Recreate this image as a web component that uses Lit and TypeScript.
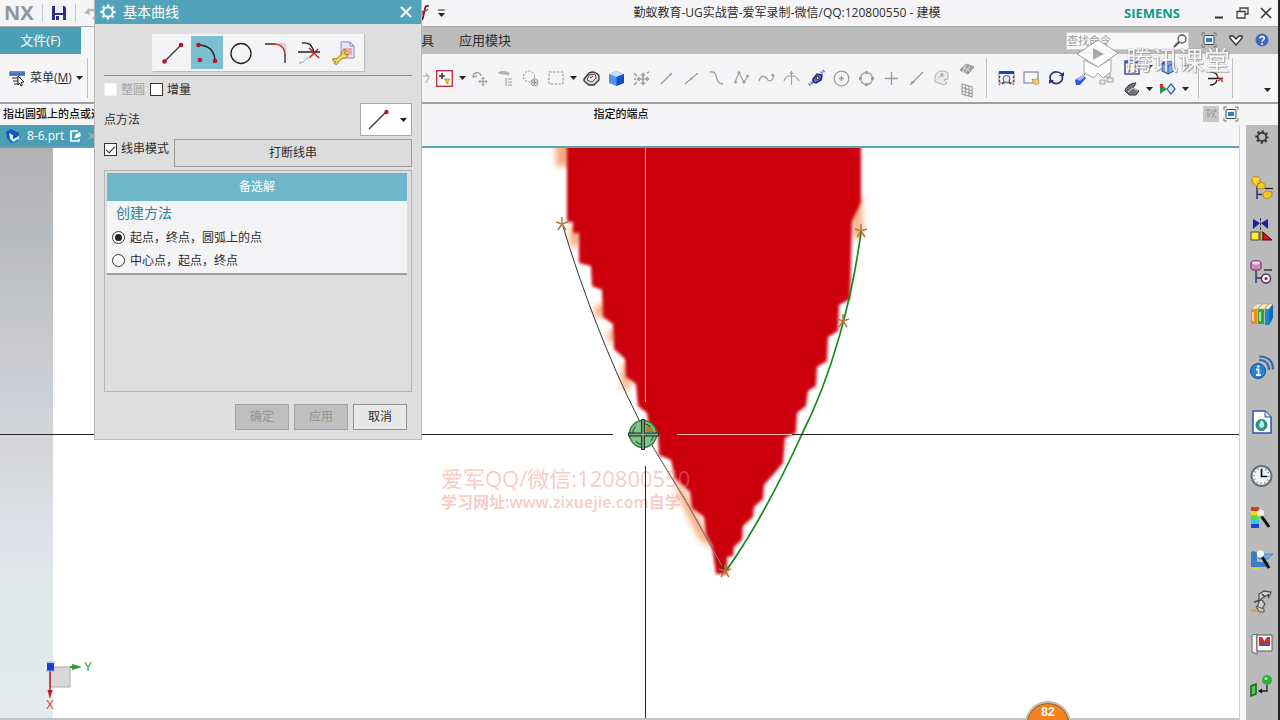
import { LitElement, html, svg, css, type TemplateResult } from "lit";
import { customElement, property, state } from "lit/decorators.js";
import { classMap } from "lit/directives/class-map.js";

const icon = (w: number, h: number, body: unknown): TemplateResult =>
  html`<svg class="ico" width=${w} height=${h} viewBox="0 0 ${w} ${h}" fill="none" aria-hidden="true">${body}</svg>`;

const gear = (size: number, color: string) => html`<svg class="ico" width=${size} height=${size} viewBox="0 0 16 16" fill="none" stroke=${color} aria-hidden="true">
  <circle cx="8" cy="8" r="4.800" stroke-width="2"></circle>
  <circle cx="8" cy="8" r="6.600" stroke-width="2" stroke-dasharray="2.600 2.580" stroke-dashoffset="1.300"></circle>
</svg>`;

const caret = html`<svg class="ico" width="7" height="4" viewBox="0 0 7 4" aria-hidden="true"><path d="M0 0h7L3.500 4z" fill="#222"></path></svg>`;

const windowBox = (s: number) => icon(s, s, svg`
  <path d="M1 4V1h3M${s - 4} 1h3v3M${s - 1} ${s - 4}v3h-3M4 ${s - 1}H1v-3" stroke="#777"/>
  <rect x="3" y="3.500" width=${s - 6} height=${s - 7} rx="1" fill="#eef5fb" stroke="#444"/>
  <rect x="5" y="6" width=${s - 10} height=${s - 12} fill="#2f7fc8"/>`);

const I = {
  save: icon(16, 16, svg`<path d="M1 1h12.500L15 2.500V15H1z" fill="#2b2f86"/><path d="M4 1h8v7H4z" fill="#e9ecf8"/><path d="M4 10h8v5H4z" fill="#fff"/><path d="M5 11h3v4H5z" fill="#2b2f86"/>`),
  undo: icon(14, 14, svg`<path d="M3 6C6 3 12 3 12 8c0 2-1 4-3 5" stroke="#b9b9bb" stroke-width="2.500"/><path d="M0 7l6 2-1-7z" fill="#b9b9bb"/>`),
  fx: icon(14, 18, svg`<path d="M12 2C8 1 8 4 7 9s-1 8-5 7" stroke="#6f2028" stroke-width="1.800"/><path d="M1 8c5-2 7 2 10-3M1 13c3-2 5-2 6-6" stroke="#c02030" stroke-width="1.300"/>`),
  menu: icon(17, 17, svg`<path d="M1 2h14v3H1zM3 8h9M4 11h7M5 14h5" stroke="#6b6b70" stroke-width="1.500"/><path d="M1 4h15" stroke="#3b78c4" stroke-width="3"/><path d="M9 6l6 6-3 .3 1.500 3-1.500.7-1.500-3L9 15z" fill="#fff" stroke="#222"/>`),
  pick: icon(17, 17, svg`<rect x=".7" y=".7" width="15.600" height="15.600" fill="#fff" stroke="#c33040" stroke-width="1.400"/><path d="M3 6h6M6 3v6" stroke="#4a2a2a" stroke-width="1.600"/><path d="M8 9h6l-2 3v2l-2-1v-2z" fill="#f4c430" stroke="#a07a10" stroke-width=".6"/>`),
  addDot: icon(17, 17, svg`<path d="M1 7C1 2 8 1 9 6M2 3l-1 4 4-1" stroke="#a5a5a5" stroke-width="1.300"/><path d="M11 7v9M6.500 11.500h9" stroke="#a5a5a5" stroke-width="1.300"/><path d="M9 9l2-2 2 2zM9 14l2 2 2-2zM8.500 9.500l-2 2 2 2zM13.500 9.500l2 2-2 2z" fill="#a5a5a5"/>`),
  hook: icon(17, 17, svg`<path d="M1 3c2-3 8-2 12 0l-2 3C8 3 5 6 1 3z" fill="#b2b2b2"/><path d="M9 8v8M11 9h4M11 12h4M11 15h4" stroke="#b5b5b5" stroke-width="1.500"/>`),
  ring: icon(17, 17, svg`<circle cx="7" cy="6.500" r="5.500" stroke="#8f8f8f" stroke-dasharray="2 1.500"/><circle cx="12.500" cy="12.500" r="3.500" stroke="#999"/><path d="M12.500 10v5M10 12.500h5" stroke="#999" stroke-width="1.500"/>`),
  marquee: icon(16, 16, svg`<rect x="1" y="2" width="14" height="12" stroke="#8c8c8c" stroke-dasharray="2.500 1.500"/>`),
  shell: icon(17, 15, svg`<path d="M1 8l5-6c4-2 8-1 10 3v4l-5 5H6L1 10z" fill="#cfd6d3" stroke="#333" stroke-width="1.300"/><path d="M4 9l2-5 6-1 1 4-4 4z" fill="#f3e7e9" stroke="#555"/><path d="M7 7l3-2" stroke="#c33" stroke-width="1.200"/>`),
  cube: icon(17, 17, svg`<path d="M8.500 1L16 4v9l-7.500 3L1 13V4z" fill="#4b94f0"/><path d="M8.500 1L16 4 8.500 7 1 4z" fill="#bfe0ff"/><path d="M8.500 7L16 4v9l-7.500 3z" fill="#1c4bbd"/>`),
  move: icon(17, 17, svg`<path d="M10 4v10M5 9h10M8 5.500l2-2 2 2M8 12.500l2 2 2-2M13.500 7l2 2-2 2M6.500 7l-2 2 2 2" stroke="#a0a0a0" stroke-width="1.500"/><path d="M1 3l3 3M1 15l3-3M1 9h2M14 3l2-1" stroke="#a0a0a0" stroke-width="1.600"/>`),
  lineA: icon(15, 15, svg`<path d="M2 13L13 2" stroke="#9a9a9a" stroke-width="1.200"/><path d="M10 3l3-1-1 3z" fill="#9a9a9a"/>`),
  lineB: icon(15, 15, svg`<path d="M1 13L14 2" stroke="#9a9a9a" stroke-width="1.200"/><circle cx="7.500" cy="7.500" r="1.300" fill="#aaa"/>`),
  sCurve: icon(15, 16, svg`<path d="M1 2c10-2 3 12 13 12" stroke="#9a9a9a" stroke-width="1.300"/>`),
  zig: icon(17, 16, svg`<path d="M2 12L6 3l5 9 4-6" stroke="#a5a5a5" stroke-width="1.200"/><circle cx="2.500" cy="12" r="1.500" fill="#a5a5a5"/><circle cx="6" cy="3" r="1.700" fill="#a5a5a5"/><circle cx="11" cy="12" r="1.700" fill="#a5a5a5"/><circle cx="14.500" cy="6" r="1.500" fill="#a5a5a5"/>`),
  wave: icon(17, 14, svg`<path d="M1 10c2-6 5-6 8-2 2 3 5 3 7-4" stroke="#a0a0a0" stroke-width="1.300"/><circle cx="14.500" cy="4" r="1.300" fill="#a0a0a0"/>`),
  arch: icon(17, 16, svg`<path d="M1 11C3 4 13 4 16 11M8.500 1v14" stroke="#a0a0a0" stroke-width="1.200"/><path d="M6.500 4l2-3 2 3z" fill="#a0a0a0"/>`),
  pen: icon(18, 18, svg`<path d="M5 10l4-5 5 1-1 5-5 3-3-1z" fill="#5f6fd0" stroke="#1c2a80" stroke-width="1.500"/><circle cx="9.500" cy="9" r="1.500" fill="#fff" stroke="#222"/><path d="M1 16l4-3M13 4l4-3" stroke="#6576d8" stroke-width="3" stroke-dasharray="1.500 1"/>`),
  target: icon(17, 17, svg`<circle cx="8.500" cy="8.500" r="7.300" stroke="#9a9a9a" stroke-width="1.200"/><path d="M8.500 6v5M6 8.500h5" stroke="#9a9a9a" stroke-width="1.300"/>`),
  circ4: icon(17, 17, svg`<circle cx="8.500" cy="8.500" r="6" stroke="#9a9a9a" stroke-width="1.200"/><path d="M8.500 1v3M8.500 13v3M1 8.500h3M13 8.500h3" stroke="#9a9a9a" stroke-width="2.500"/>`),
  plus: icon(15, 15, svg`<path d="M7.500 1v13M1 7.500h13" stroke="#9a9a9a" stroke-width="1.300"/>`),
  lineC: icon(15, 15, svg`<path d="M1 14L14 1" stroke="#9a9a9a" stroke-width="1.200"/><path d="M2 10l4 1-3 2z" fill="#9a9a9a"/>`),
  face: icon(17, 16, svg`<path d="M2 6c2-6 9-6 13-3v6l-4 1 3 3-3 2-9-3z" fill="#e8e8e8" stroke="#b0b0b0"/><path d="M5 7l6-1" stroke="#bbb"/><circle cx="9" cy="4.500" r="1.500" fill="#aaa"/>`),
  gridTop: icon(16, 14, svg`<path d="M1 8l6-6 8 3-6 7z" fill="#a5a5a5" stroke="#8f8f8f"/><path d="M4 5l7 4M7 2l-3 8M11 4L6 11" stroke="#dcdcdc"/>`),
  gridBot: icon(12, 15, svg`<path d="M1 1l10 3v10L1 11zM1 4.500l10 3M1 8l10 3M4.500 2v10M8 3v10" stroke="#9d9d9d" stroke-width="1.200"/>`),
  fit: icon(17, 16, svg`<path d="M1 2h15v11H1z" stroke="#7a8192"/><path d="M1 2.500h15" stroke="#1f3fbf" stroke-width="3"/><path d="M1.500 6v9M15.500 6v9" stroke="#c22" stroke-width="1.500" stroke-dasharray="2 2"/><circle cx="8.500" cy="9" r="3.500" fill="#dfeef5" stroke="#556"/><path d="M4 14l2-2M11 12l2 2" stroke="#333" stroke-width="1.500"/>`),
  pan: icon(17, 16, svg`<rect x="1" y="2" width="14" height="11" fill="#f6f7fb" stroke="#66709a"/><path d="M9 9l3 1 3-2 1 5-3 2-3-2z" fill="#f0cd6a" stroke="#a88a3c" stroke-width=".7"/>`),
  rotate: icon(17, 16, svg`<path d="M3 11C0 5 5 1.500 9 2c3 .3 5 2 5.500 4M14 5c2 6-3 9-6 8.500-2 0-4-1-5-3" stroke="#27357a" stroke-width="1.700"/><path d="M11 6h5V2zM6 10H1v4z" fill="#27357a"/>`),
  brush: icon(15, 15, svg`<path d="M1 9l8-5 3 3-6 7H2z" fill="#2f55d8"/><path d="M2 8l7-4 2 2-5 4z" fill="#9bb7ff"/><path d="M10 4l3-3" stroke="#444"/>`),
  blocks: icon(17, 17, svg`<path d="M6 3h6v4H6zM2 10h5v4H2zM9 8h6v4H9z" fill="#ececec" stroke="#a0a0a0"/>`),
  layout: icon(16, 15, svg`<rect x="1" y="1" width="14" height="13" fill="#fff" stroke="#2c458c" stroke-width="1.400"/><path d="M1 2.500h14" stroke="#2c55b8" stroke-width="2"/><path d="M4 5.500l2 2M12 5.500l-2 2M4 12l2-2M12 12l-2-2" stroke="#c0392b" stroke-width="2.200"/>`),
  cube2: icon(16, 15, svg`<path d="M8 1l6 2v8l-6 3-6-3V3z" fill="#7aa4ee" stroke="#234a9e"/><path d="M2 3l6 3 6-3M8 6v8" stroke="#234a9e"/>`),
  clip: icon(16, 14, svg`<path d="M1 9C2 4 7 1 12 1L9 6l6 3-3 4H5z" fill="#6f7476" stroke="#333"/><path d="M4 10l5-4 5 3" stroke="#ddd"/>`),
  play: icon(17, 14, svg`<path d="M1 2l7 5-7 5z" fill="#2a9b3c"/><path d="M1 2h3v4H1z" fill="#d3302b"/><path d="M8 7l4-5 4 5-4 5z" fill="#dce8ff" stroke="#294a9a" stroke-width="1.200"/>`),
  trim: icon(17, 17, svg`<path d="M3 2c6 0 7 2 8 6M1 8.500h15M3 15c3 0 6-1 7-5" stroke="#222" stroke-width="1.300"/><path d="M10 6l6 6M16 8l-5 3" stroke="#d33" stroke-width="1.200"/>`),
  note: icon(16, 16, svg`<rect width="16" height="16" fill="#c8c8c8"/><path d="M2 4h6M5 3v8l5-7M9 7l4 5M13 3l-4 9M10 5h4" stroke="#989898"/>`),
  part: icon(16, 16, svg`<path d="M1 4l5-3 8 4-1 8-7 2-4-5z" fill="#1554c4"/><path d="M4 5l4 2v4l6-3v3l-6 3-3-3z" fill="#d6ebff"/>`),
  edit: icon(12, 12, svg`<path d="M8 1H1v10h8V9" stroke="#fff" stroke-width="1.700"/><path d="M4 8l2-4 4-2 1 4-4 2z" fill="#fff"/>`),
};

const dlgIcons = [
  { name: "直线", art: icon(26, 26, svg`<path d="M4 22L21 5" stroke="#333" stroke-width="1.300"/><circle cx="4.500" cy="21.500" r="2.300" fill="#c3131f"/><circle cx="21" cy="5" r="2.300" fill="#c3131f"/>`) },
  { name: "圆弧", art: icon(26, 26, svg`<path d="M4 5c10 0 16 5 17 15" stroke="#222" stroke-width="1.400"/><circle cx="4.500" cy="5" r="2.300" fill="#c3131f"/><circle cx="6" cy="20" r="2.300" fill="#c3131f"/><circle cx="21" cy="21" r="2.300" fill="#c3131f"/>`) },
  { name: "圆", art: icon(26, 26, svg`<circle cx="13" cy="13.500" r="10" stroke="#222" stroke-width="1.300"/>`) },
  { name: "圆角", art: icon(26, 26, svg`<path d="M3 4h10M23 14v9" stroke="#333" stroke-width="1.400"/><path d="M13 4h10v9" stroke="#999" stroke-width=".7"/><path d="M10 4c9 0 13 3 13 12" stroke="#d3302b" stroke-width="1.500"/>`) },
  { name: "修剪", art: icon(26, 26, svg`<path d="M6 3c8-1 10 3 12 9M2 12h22" stroke="#222" stroke-width="1.400"/><path d="M3 23c7 0 5-5 9-5 3 0 5-2 6-5" stroke="#999"/><path d="M13 8l10 10M22 9l-8 8" stroke="#c3131f" stroke-width="1.300"/>`) },
  { name: "编辑曲线参数", art: icon(26, 26, svg`<path d="M11 2h9l4 4v12H11z" fill="#e7e2f8" stroke="#8f83c8"/><path d="M13 8h9v7h-9z" fill="#f0a5ac"/><path d="M20 2v4h4" stroke="#8f83c8"/><path d="M2 20c1-2 3-2 4-1l6-5c-1-3 1-5 4-4l-2 3 2 2 2-1c0 3-2 5-5 4l-5 4c0 3-3 3-4 1l2-1z" fill="#efd94e" stroke="#8a7720" stroke-width=".9"/>`) },
];

const railIcons: { name: string; gap?: boolean; art: TemplateResult }[] = [
  { name: "装配导航器", art: icon(24, 26, svg`<path d="M7 11v13M7 19.500h5" stroke="#2d2f7e" stroke-width="1.500"/><path d="M15 13.500h8" stroke="#222" stroke-width="1.300"/><path d="M2 3l4-2 4 2v5l-4 2-4-2zM7 9l4-2 4 2v4l-4 1-4-1z" fill="#f6c822" stroke="#a87c0a" stroke-width=".8"/><path d="M2 3l4 2 4-2M6 5v5" stroke="#fbe88c"/><path d="M13 18l4-2 5 1v4l-5 3-4-2z" fill="#f6c822" stroke="#a87c0a" stroke-width=".8"/>`) },
  { name: "约束导航器", art: icon(24, 26, svg`<path d="M3 2l7 4-7 6zM18 2l-7 4 7 6z" fill="#1a1fb0"/><path d="M10.500 1v13" stroke="#333" stroke-dasharray="3 1.500"/><path d="M1 15h8v8H1z" fill="#ffee2e" stroke="#444"/><path d="M10 15h3v8h-3z" fill="#cfc52a" stroke="#555"/><path d="M13 15l9 8h-9z" fill="#d5121d" stroke="#500"/>`) },
  { name: "部件导航器", art: icon(24, 26, svg`<path d="M6 11v13M6 19h5" stroke="#2d2f5e" stroke-width="1.400"/><path d="M14 11h8" stroke="#222" stroke-width="1.300"/><path d="M1 4c0-3 10-3 10 0v5c0 3-10 3-10 0z" fill="#cf87bd" stroke="#6b2459"/><ellipse cx="6" cy="4" rx="4" ry="1.700" fill="#f3d3ea"/><circle cx="16" cy="19.500" r="4.500" fill="#fff" stroke="#6b2459" stroke-width="1.500"/><circle cx="16" cy="19.500" r="1.500" fill="#6b2459"/>`) },
  { name: "重用库", art: icon(26, 26, svg`<path d="M2 8h6v15H2z" fill="#ef8a1c"/><path d="M9 8h6v15H9z" fill="#36a53b"/><path d="M16 8h4v16h-4z" fill="#1c88d2"/><path d="M2 8l6-5h5L8 8zM9 8l5-5h5l-4 5zM16 8l4-5h4l-4 5z" fill="#fbf3df" stroke="#b99a55" stroke-width=".6"/><path d="M4 11v9M11 11v9" stroke="#fff" stroke-width="1.500" opacity=".8"/><path d="M20 8l4-5v14l-4 7z" fill="#0d6ab4"/>`) },
  { name: "HD3D 工具", gap: true, art: icon(26, 26, svg`<circle cx="9" cy="16" r="7.500" fill="#2582d8" stroke="#0d4c94"/><path d="M7 14.500h2.500V20M7 20h5" stroke="#fff" stroke-width="1.800"/><circle cx="9.300" cy="11.500" r="1.300" fill="#fff"/><path d="M10 5c7 0 10 4 10 10M10 1.500c10 0 14 5 14 13" stroke="#3a67b4" stroke-width="2.200"/>`) },
  { name: "Web 浏览器", gap: true, art: icon(24, 26, svg`<path d="M3 2h12l6 6v16H3z" fill="#fff" stroke="#2a56a8" stroke-width="1.500"/><path d="M15 2v6h6" fill="#cfe0f7" stroke="#2a56a8"/><circle cx="11.500" cy="16" r="5.500" fill="#25a065" stroke="#2a6ab0"/><path d="M11.500 11c4 3 3 8 0 8s-3-4 0-8z" fill="#bfe9f7"/>`) },
  { name: "历史记录", gap: true, art: icon(24, 26, svg`<circle cx="11.500" cy="13" r="10" fill="#f4f6f8" stroke="#62707b" stroke-width="2"/><circle cx="11.500" cy="13" r="7.500" stroke="#60707c" stroke-dasharray="1 2.900" stroke-width="1.500"/><path d="M11.500 6v7.500h6" stroke="#111" stroke-width="1.700"/>`) },
  { name: "系统材料", art: icon(24, 26, svg`<path d="M1 2h8v5H1z" fill="#e3341c"/><path d="M1 6h8v4H1z" fill="#ffd21c"/><path d="M1 10h8v5H1z" fill="#5be02c"/><path d="M1 15h8v4H1z" fill="#27c9ec"/><path d="M1 19h8v4H1z" fill="#1e42d6"/><path d="M10 9l9 13" stroke="#111" stroke-width="3"/><circle cx="10.500" cy="8" r="3.500" fill="#fff" opacity=".9"/>`) },
  { name: "加工向导", art: icon(24, 26, svg`<path d="M1 5l3-1 3 2v9h12l-3 5H1z" fill="#3a7fc4"/><path d="M9 7h14l-5 5H9z" fill="#78aede" stroke="#3a6fa8" stroke-width=".7"/><path d="M1 22h8" stroke="#d8cf52" stroke-width="2"/><path d="M11 8l8 13" stroke="#111" stroke-width="3"/><circle cx="10.500" cy="7" r="3.500" fill="#fff"/>`) },
  { name: "机床", art: icon(24, 26, svg`<path d="M9 5l5-3 7 1-1 3-5 1-4 3 4 5-3 5-5-1 2-6z" fill="#cfd3d6" stroke="#555" stroke-width="1.300"/><path d="M4 13l7-2M12 5l3 3M18 5l1 4" stroke="#444" stroke-width="1.500"/><path d="M1 20h7l2 3H1z" fill="#f0a02a"/><path d="M6 17l8 3v3h-5z" fill="#bfc4c7" stroke="#555"/>`) },
  { name: "角色", art: icon(24, 26, svg`<path d="M2 4l5-1v20l-5-2z" fill="#f3f3f3" stroke="#666"/><path d="M7 4h15v16H7z" fill="#fff" stroke="#555"/><path d="M9 6h11v9H9z" fill="#d42a2a"/><path d="M12 6h5l-2.500 4z" fill="#fff"/><path d="M11.500 15v-4l3 2 3-2v4z" fill="#2a5fc8"/>`) },
  { name: "系统场景", art: icon(24, 26, svg`<circle cx="17" cy="7" r="5" fill="#2fae3a"/><circle cx="16" cy="5.500" r="1.500" fill="#b7f2bd"/><path d="M17 12v6h-7" stroke="#222" stroke-width="1.300"/><path d="M8 18l4-2.500v5z" fill="#111"/><path d="M1 13l5-2v10l-5 2z" fill="#55c95c" stroke="#14611b" stroke-width="1.500"/>`) },
];

const FONT = css`"Open Sans", "Noto Sans CJK SC", sans-serif`;

@customElement("basic-curve-dialog")
class BasicCurveDialog extends LitElement {
  @property({ type: Number }) tool = 1;

  static styles = css`
    :host { display: block; box-sizing: border-box; width: 328px; background: #dedede; border: 1px solid #b9b9b9; border-top: 0;
      font: 12px/16px ${FONT}; color: #2e2e2e; }
    * { box-sizing: border-box; }
    .ico { display: block; flex: none; }
    button, select { font: inherit; color: inherit; border-radius: 0; padding: 0; margin: 0; }
    header { height: 24px; padding: 0 9px 0 5px; display: flex; align-items: center; gap: 7px; background: #52a3ba; color: #fff; font-size: 14px; }
    h1 { flex: 1; margin: 0; font: inherit; }
    .x { border: 0; background: none; }
    .body { padding: 10px 9px 9px; display: flex; flex-direction: column; }
    .tools { align-self: center; display: flex; gap: 2px; padding: 2px 5px; height: 37px; background: #f4f4f6; box-shadow: 1px 1px 1px #bdbdbd; }
    .tool { width: 32px; height: 33px; border: 0; background: none; display: grid; place-items: center; }
    .tool.on { background: #7bbfd0; }
    hr { width: 100%; height: 1px; margin: 4px 0 0; border: 0; background: #8f8f8f; }
    .row { display: flex; align-items: center; justify-content: space-between; }
    .checks { height: 27px; justify-content: flex-start; gap: 5px; }
    .method { height: 33px; }
    .chain { margin-top: 3px; align-items: flex-start; gap: 5px; }
    label { display: flex; align-items: center; gap: 4px; }
    label.off { color: #a3a3a3; }
    input { appearance: none; width: 13px; height: 13px; margin: 0; background: #fff; border: 1px solid #333; display: grid; place-items: center; }
    input:disabled { border-color: #efefef; }
    input[type="checkbox"]:checked::after { content: ""; width: 8px; height: 4px; border: solid #222; border-width: 0 0 1px 1px; rotate: -48deg; translate: 0 -1px; }
    input[type="radio"] { border-radius: 50%; }
    input[type="radio"]:checked::after { content: ""; width: 7px; height: 7px; border-radius: 50%; background: #222; }
    .chain label { height: 20px; }
    .break { flex: 1; height: 28px; background: #dcdcdc; border: 1px solid #9a9a9a; }
    .combo { display: grid; width: 52px; height: 33px; }
    .combo > * { grid-area: 1 / 1; }
    .combo select { appearance: none; width: 100%; height: 100%; background: #fff; border: 1px solid #a9a9a9; }
    .art { pointer-events: none; display: flex; align-items: center; justify-content: space-between; padding: 0 5px 0 6px; }
    .frame { margin-top: 3px; height: 222px; padding: 2px 4px 2px 2px; border: 1px solid #b4b4b4; }
    .alt { display: block; width: 100%; height: 28px; border: 0; background: #70b6ca; color: #fff; }
    fieldset { margin: 0; height: 74px; padding: 2px 5px 0; border: 0; background: #f4f3f5; border-bottom: 2px solid #9c9c9c; display: flex; flex-direction: column; }
    .legend { font-size: 14px; line-height: 20px; color: #2b7f9b; padding-left: 4px; margin-bottom: 3px; }
    fieldset label { height: 23px; gap: 5px; }
    .foot { margin-top: 12px; padding-right: 5px; display: flex; justify-content: flex-end; gap: 5px; }
    .foot button { width: 54px; height: 26px; border: 1px solid #8f8f8f; background: #e8e8e8; }
    .foot button:disabled { background: #bfbfbf; color: #929292; border-color: #a2a2a2; }
  `;

  render() {
    return html`
      <header>
        ${gear(16, "#fff")}
        <h1>基本曲线</h1>
        <button class="x" aria-label="关闭">${icon(12, 12, svg`<path d="M1 1l10 10M11 1L1 11" stroke="#fff" stroke-width="2"/>`)}</button>
      </header>
      <div class="body">
        <div class="tools">
          ${dlgIcons.map((t, i) => html`<button class=${classMap({ tool: true, on: i === this.tool })} aria-label=${t.name} @click=${() => (this.tool = i)}>${t.art}</button>`)}
        </div>
        <hr />
        <div class="row checks">
          <label class="off"><input type="checkbox" disabled />整圆</label>
          <label><input type="checkbox" />增量</label>
        </div>
        <div class="row method">
          <label for="pt">点方法</label>
          <div class="combo">
            <select id="pt"><option value="end" aria-label="端点"></option></select>
            <span class="art">${icon(24, 24, svg`<path d="M3 21L20 4" stroke="#333" stroke-width="1.300"/><circle cx="20.500" cy="4" r="2.200" fill="#c3131f"/>`)}${caret}</span>
          </div>
        </div>
        <div class="row chain">
          <label><input type="checkbox" .checked=${true} />线串模式</label>
          <button class="break">打断线串</button>
        </div>
        <div class="frame">
          <button class="alt">备选解</button>
          <fieldset aria-labelledby="lg">
            <span class="legend" id="lg">创建方法</span>
            <label><input type="radio" name="m" .checked=${true} />起点，终点，圆弧上的点</label>
            <label><input type="radio" name="m" />中心点，起点，终点</label>
          </fieldset>
        </div>
        <div class="foot">
          <button disabled>确定</button><button disabled>应用</button><button>取消</button>
        </div>
      </div>`;
  }
}

const star = (x: number, y: number) => svg`<path d="M${x} ${y - 7}V${y}M${x - 6} ${y - 2}L${x} ${y}L${x + 6} ${y - 2}M${x - 4} ${y + 6}L${x} ${y}L${x + 4} ${y + 6}" stroke="#b5773a" stroke-width="1.500"/>`;

@customElement("model-canvas")
class ModelCanvas extends LitElement {
  static styles = css`
    :host { display: block; background: #fff; }
    svg { display: block; width: 100%; height: 100%; }
    .mark { fill: #f08a80; fill-opacity: 0.45; font-family: ${FONT}; }
    .big { font-size: 22px; }
    .small { font-size: 16px; font-weight: 600; }
    .axis { font: 12px "Liberation Sans", sans-serif; }
  `;

  render() {
    return html`<svg fill="none" role="img" aria-label="图形窗口">
      <defs>
        <linearGradient id="sky" x1="0" y1="0" x2="0" y2="1">
          <stop offset="0" stop-color="#b3b3b5"></stop><stop offset=".1" stop-color="#b8b6b9"></stop><stop offset=".15" stop-color="#b5bcc0"></stop>
          <stop offset=".2" stop-color="#c0bec1"></stop><stop offset=".27" stop-color="#bfc5c8"></stop><stop offset=".34" stop-color="#cbc9cc"></stop>
          <stop offset=".42" stop-color="#c9d0d6"></stop><stop offset=".5" stop-color="#d5d5d8"></stop><stop offset=".7" stop-color="#dfe2e8"></stop>
          <stop offset=".76" stop-color="#e2e8ea"></stop><stop offset="1" stop-color="#e5eaed"></stop>
        </linearGradient>
        <filter id="soft"><feGaussianBlur stdDeviation="1.600"></feGaussianBlur></filter>
        <filter id="haze" x="-10%" width="120%"><feGaussianBlur stdDeviation="3"></feGaussianBlur></filter>
      </defs>
      <rect x="0" y="0" width="53" height="100%" fill="url(#sky)"></rect>
      <g transform="translate(0 -148)">
        <path filter="url(#haze)" d="M556 130h20v36h-20zM853 198h9v40h-9zM570 226h10v20h-10zM595 305h12v12h-12zM608 330h8v12h-8zM622 365h8v24h-8zM672 468L700 520 716 550 700 540 680 500z" fill="#f6a878"></path>
        <path filter="url(#soft)" d="M567 130V222H573V233H579V263L591 266 592 286 602 290 603 317 613 324 614 349 625 359 626 377 636 384 638 406 647 413 649 428 658 434 659 455 671 460 675 478 690 492 692 508 704 517 706 534 712 546 716 574H727V557L733 556 734 547 742 540 743 526 753 517 754 507 763 499 764 485 773 475 783 463 785 438 796 433 797 413 806 406 808 391 816 386 817 367 827 361 828 337 838 331 839 305 850 299 851 262 852 222 861 202V130Z" fill="#cc0008"></path>
        <text class="mark big" x="441" y="487">爱军QQ/微信:120800550</text>
        <text class="mark small" x="441" y="508">学习网址:www.zixuejie.com自学</text>
        <path d="M562 223C582 290 608 358 638 418L653 447 687 503 725 571" stroke="#333" stroke-width="1"></path>
        <path d="M653 447L687 503 722 566" stroke="#a08078" stroke-width="1"></path>
        <path d="M861 232C852 300 832 375 802 434 782 478 755 530 726 571" stroke="#128a18" stroke-width="1.700"></path>
        ${star(562, 224)}${star(861, 231)}${star(843, 321)}${star(725, 571)}
        <path d="M0 434.500H613M645.500 466V900" stroke="#222"></path>
        <path d="M677 434.500H792" stroke="#f0b8b8"></path>
        <path d="M792 434.500H3000" stroke="#222"></path>
        <path d="M645.500 148V402" stroke="#f3a3a3"></path>
        <circle cx="643" cy="434" r="13.500" fill="#7cc488" stroke="#3c7a48" stroke-width="1.500"></circle>
        <path d="M646 424a11 11 0 0 1 8 8h-8z" fill="#9a8a3a"></path>
        <circle cx="643" cy="434" r="10.500" stroke="#1f3a26" stroke-dasharray="8 8.500"></circle>
        <path d="M643 419v31M628 434.500h31" stroke="#243d2b" stroke-width="4"></path>
        <path d="M643 420v29M629 434.500h29" stroke="#8fae95" stroke-width="1.500"></path>
        <path d="M50 667h20v20H50z" fill="#d8d8d8" stroke="#aaa"></path>
        <path d="M50 667v28" stroke="#c0202c" stroke-width="1.500"></path>
        <path d="M47.500 690h5L50 699z" fill="#c0202c"></path>
        <path d="M70 667h4" stroke="#2c9b32" stroke-width="2"></path>
        <path d="M72 664l10 3-10 3z" fill="#2c9b32"></path>
        <path d="M47 663h7v8h-7z" fill="#1a3fd0"></path><path d="M46 662h9M46 671h9" stroke="#8fb0ff"></path>
        <text class="axis" x="84" y="671" fill="#2c9b32">Y</text>
        <text class="axis" x="46" y="709" fill="#d4453c">X</text>
      </g>
    </svg>`;
  }
}

@customElement("app-root")
class AppRoot extends LitElement {
  @state() private query = "";

  static styles = css`
    :host { display: flex; flex-direction: column; position: relative; height: 100vh; overflow: hidden; box-sizing: border-box; border-right: 2px solid #242424;
      background: #f5f4f6; color: #2e2e2e; font: 12px/16px ${FONT}; }
    * { box-sizing: border-box; }
    .ico { display: block; flex: none; }
    button { font: inherit; color: inherit; border: 0; background: none; padding: 0; margin: 0; display: flex; align-items: center; justify-content: center; }
    .title { display: flex; align-items: center; height: 26px; }
    .quick { display: flex; align-items: center; gap: 8px; padding-left: 4px; width: 450px; }
    .nx { font: bold 20px/26px "Open Sans", sans-serif; color: #8f979a; width: 30px; }
    .bar { width: 1px; height: 18px; background: #c9c9c9; }
    .late { margin-left: auto; display: flex; align-items: center; gap: 6px; padding-right: 4px; }
    .caption { flex: 1; text-align: center; margin: 0; font: inherit; }
    .win { display: flex; align-items: center; width: 154px; }
    .brand { font: bold 13px/16px "Open Sans", sans-serif; color: #0c9a90; width: 84px; }
    .win button { width: 24px; height: 24px; }
    .tabs { display: flex; height: 28px; background: #bcbcbc; border-top: 1px solid #a9a9a9; font-size: 13px; align-items: stretch; }
    .tabs button { padding-bottom: 1px; }
    .file { width: 81px; background: #4a9fb5; color: #fff; }
    .home { width: 60px; background: #f5f4f6; }
    .rest { flex: 1; display: flex; gap: 25px; padding-left: 267px; }
    .find { display: flex; align-items: center; gap: 12px; padding-right: 9px; }
    .box { display: flex; align-items: center; width: 123px; height: 18px; background: #f8f8f8; border: 1px solid #d0d0d0; }
    .box input { flex: 1; min-width: 0; height: 16px; border: 0; padding: 0; background: none; font: 11px/16px ${FONT}; outline: 0; }
    .box input::placeholder { color: #9c9c9c; opacity: 1; }
    .ribbon { display: flex; align-items: center; height: 50px; border-bottom: 2px solid #9f9f9f; padding-right: 5px; }
    .menu { width: 87px; gap: 4px; padding-left: 9px; justify-content: flex-start; }
    .sep { width: 1px; height: 40px; background: #bdbdbd; }
    .behind { width: 344px; display: flex; justify-content: flex-end; }
    .slot { width: 25px; height: 25px; }
    .drop { width: 11px; height: 25px; }
    .col { display: grid; grid-template-rows: 22px 22px; }
    .pair { display: flex; align-items: center; }
    .pair .slot, .pair .drop { height: 22px; }
    .gapL { margin: 0 7px; }
    .last { display: flex; align-items: center; gap: 4px; padding-left: 7px; }
    .low { margin-left: auto; align-self: flex-end; }
    .prompt { display: grid; grid-template-columns: 1fr auto 1fr; align-items: center; height: 21px; padding: 0 39px 2px 3px; font-size: 11px; font-weight: 500; color: #111; }
    .prompt p { margin: 0; }
    .prompt .right { display: flex; justify-content: flex-end; gap: 4px; }
    .work { flex: 1; display: flex; min-height: 0; }
    .stage { flex: 1; min-width: 0; display: flex; flex-direction: column; margin-right: 6px; border-right: 1px solid #cfcfcf; border-bottom: 2px solid #c4c4c4; }
    .docs { height: 23px; border-bottom: 2px solid #57a5b6; display: flex; }
    .doc { width: 120px; background: #4a9fb5; color: #fff; justify-content: flex-start; gap: 6px; padding-left: 5px; }
    model-canvas { flex: 1; min-height: 0; }
    .rail { width: 32px; background: #b9bab9; display: flex; flex-direction: column; align-items: center; }
    .rail button { width: 28px; height: 42px; }
    .rail .cog { height: 24px; width: 32px; margin-bottom: 18px; }
    .rail .gap { margin-top: 12px; }
    basic-curve-dialog { position: absolute; left: 94px; top: 0; }
    .live { position: absolute; right: 48px; top: 37px; display: flex; align-items: center; gap: 5px; color: #fff; opacity: 0.85;
      font: 26px/42px "Noto Sans CJK SC", sans-serif; text-shadow: 0 0 1px #777, 0 0 1px #777, 1px 1px 1px #999; pointer-events: none; }
    .badge { position: absolute; left: 82%; bottom: -27px; margin-left: -23px; width: 46px; height: 46px; border-radius: 50%; background: #f58220; border: 2px solid #c3b9b2;
      box-shadow: inset 0 0 0 1px #8c5a2a; color: #fff; font: bold 12px/18px "Liberation Sans", sans-serif; align-items: flex-start; }
  `;

  private slot_(art: TemplateResult, name: string) {
    return html`<button class="slot" aria-label=${name}>${art}</button>`;
  }

  private drop_() {
    return html`<button class="drop" aria-label="更多">${caret}</button>`;
  }

  render() {
    return html`
      <header class="title">
        <div class="quick">
          <span class="nx">NX</span><span class="bar"></span>
          <button aria-label="保存">${I.save}</button><span class="bar"></span>
          <button aria-label="撤销">${I.undo}</button>
          <div class="late">${I.fx}<button aria-label="自定义">${icon(9, 8, svg`<path d="M1 1h7" stroke="#222"/><path d="M1 4h7L4.500 8z" fill="#222"/>`)}</button></div>
        </div>
        <h1 class="caption">勤蚁教育-UG实战营-爱军录制-微信/QQ:120800550 - 建模</h1>
        <div class="win">
          <span class="brand">SIEMENS</span>
          <button aria-label="最小化">${icon(12, 12, svg`<path d="M2 10.500h8" stroke="#333" stroke-width="2"/>`)}</button>
          <button aria-label="还原">${icon(13, 12, svg`<path d="M4 4V1h8v6H9" stroke="#444" stroke-width="1.300"/><path d="M1 4.500h8V11H1z" stroke="#444" stroke-width="1.300"/>`)}</button>
          <button aria-label="关闭">${icon(12, 12, svg`<path d="M1 1l10 10M11 1L1 11" stroke="#333" stroke-width="1.500"/>`)}</button>
        </div>
      </header>
      <nav class="tabs">
        <button class="file">文件(F)</button>
        <div class="home"></div>
        <div class="rest"><button>工具</button><button>应用模块</button></div>
        <div class="find">
          <div class="box">
            <input aria-label="查找命令" placeholder="查找命令" .value=${this.query} @input=${(e: Event) => (this.query = (e.target as HTMLInputElement).value)} />
            ${icon(16, 16, svg`<circle cx="10" cy="6" r="4" stroke="#555" stroke-width="1.300"/><path d="M7 9l-5 5" stroke="#555" stroke-width="2.200"/>`)}
          </div>
          <button aria-label="全屏">${windowBox(16)}</button>
          <button aria-label="折叠">${icon(14, 12, svg`<path d="M1 2h3l3 3 3-3h3v2l-6 7-6-7z" fill="#fff" stroke="#333" stroke-width="1.300"/>`)}</button>
          <button aria-label="帮助">${icon(14, 14, svg`<circle cx="7" cy="7" r="6.500" fill="#3d68c0"/><path d="M4.800 5.500C5 2.800 9.200 3 9.200 5.400 9.200 7 7 7 7 8.800" stroke="#fff" stroke-width="1.500"/><circle cx="7" cy="11" r="1" fill="#fff"/>`)}</button>
        </div>
      </nav>
      <div class="ribbon">
        <button class="menu">${I.menu}<span>菜单(<u>M</u>)</span>${caret}</button>
        <span class="sep"></span>
        <div class="behind">${icon(10, 16, svg`<path d="M1 6h6M4 3l3 4-3 6" stroke="#bbb" stroke-width="1.500"/>`)}</div>
        ${this.slot_(I.pick, "选择过滤")}${this.drop_()}
        ${this.slot_(I.addDot, "点")}${this.slot_(I.hook, "相切")}${this.slot_(I.ring, "圆环")}
        ${this.slot_(I.marquee, "矩形选择")}${this.drop_()}
        ${this.slot_(I.shell, "着色")}${this.slot_(I.cube, "实体")}${this.slot_(I.move, "移动")}
        ${this.slot_(I.lineA, "终点")}${this.slot_(I.lineB, "中点")}${this.slot_(I.sCurve, "控制点")}
        ${this.slot_(I.zig, "极点")}${this.slot_(I.wave, "样条点")}${this.slot_(I.arch, "交点")}
        ${this.slot_(I.pen, "定义点")}${this.slot_(I.target, "圆心")}${this.slot_(I.circ4, "象限点")}
        ${this.slot_(I.plus, "现有点")}${this.slot_(I.lineC, "线上点")}${this.slot_(I.face, "面上点")}
        <div class="col"><button class="slot" aria-label="曲面">${I.gridTop}</button><button class="slot" aria-label="栅格">${I.gridBot}</button></div>
        <span class="sep gapL"></span>
        ${this.slot_(I.fit, "适合窗口")}${this.slot_(I.pan, "平移")}${this.slot_(I.rotate, "旋转")}${this.slot_(I.brush, "渲染")}${this.slot_(I.blocks, "显示")}
        <div class="col">
          <div class="pair">${this.slot_(I.layout, "布局")}${this.drop_()}${this.slot_(I.cube2, "视图")}${this.drop_()}</div>
          <div class="pair">${this.slot_(I.clip, "剪切")}${this.drop_()}${this.slot_(I.play, "动画")}${this.drop_()}</div>
        </div>
        <div class="last"><span class="sep"></span>${this.slot_(I.trim, "修剪曲线")}<span class="sep"></span></div>
        <button class="drop low" aria-label="工具条选项">${caret}</button>
      </div>
      <div class="prompt">
        <p>指出圆弧上的点或选</p>
        <p>指定的端点</p>
        <div class="right"><button aria-label="注释">${I.note}</button><button aria-label="全屏显示">${windowBox(16)}</button></div>
      </div>
      <div class="work">
        <main class="stage">
          <div class="docs"><button class="doc">${I.part}<span>8-6.prt</span>${I.edit}${icon(8, 8, svg`<path d="M1 1l6 6M7 1L1 7" stroke="#b5a9a4" stroke-width="1.500"/>`)}</button></div>
          <model-canvas></model-canvas>
        </main>
        <aside class="rail">
          <button class="cog" aria-label="设置">${gear(14, "#333")}</button>
          ${railIcons.map((r) => html`<button class=${classMap({ gap: !!r.gap })} aria-label=${r.name}>${r.art}</button>`)}
        </aside>
      </div>
      <basic-curve-dialog></basic-curve-dialog>
      <div class="live">
        ${icon(46, 44, svg`<path d="M2 17L23 3l20 13-20 14z" fill="#fff" stroke="#8f8f8f"/><path d="M9 23v13l10 5 4-5 5 5 8-6V22l-13 8z" fill="#fff" stroke="#999"/><path d="M18 11l11 6-11 6z" fill="#9aa3a0"/>`)}
        <span>腾讯课堂</span>
      </div>
      <button class="badge">82</button>`;
  }
}
